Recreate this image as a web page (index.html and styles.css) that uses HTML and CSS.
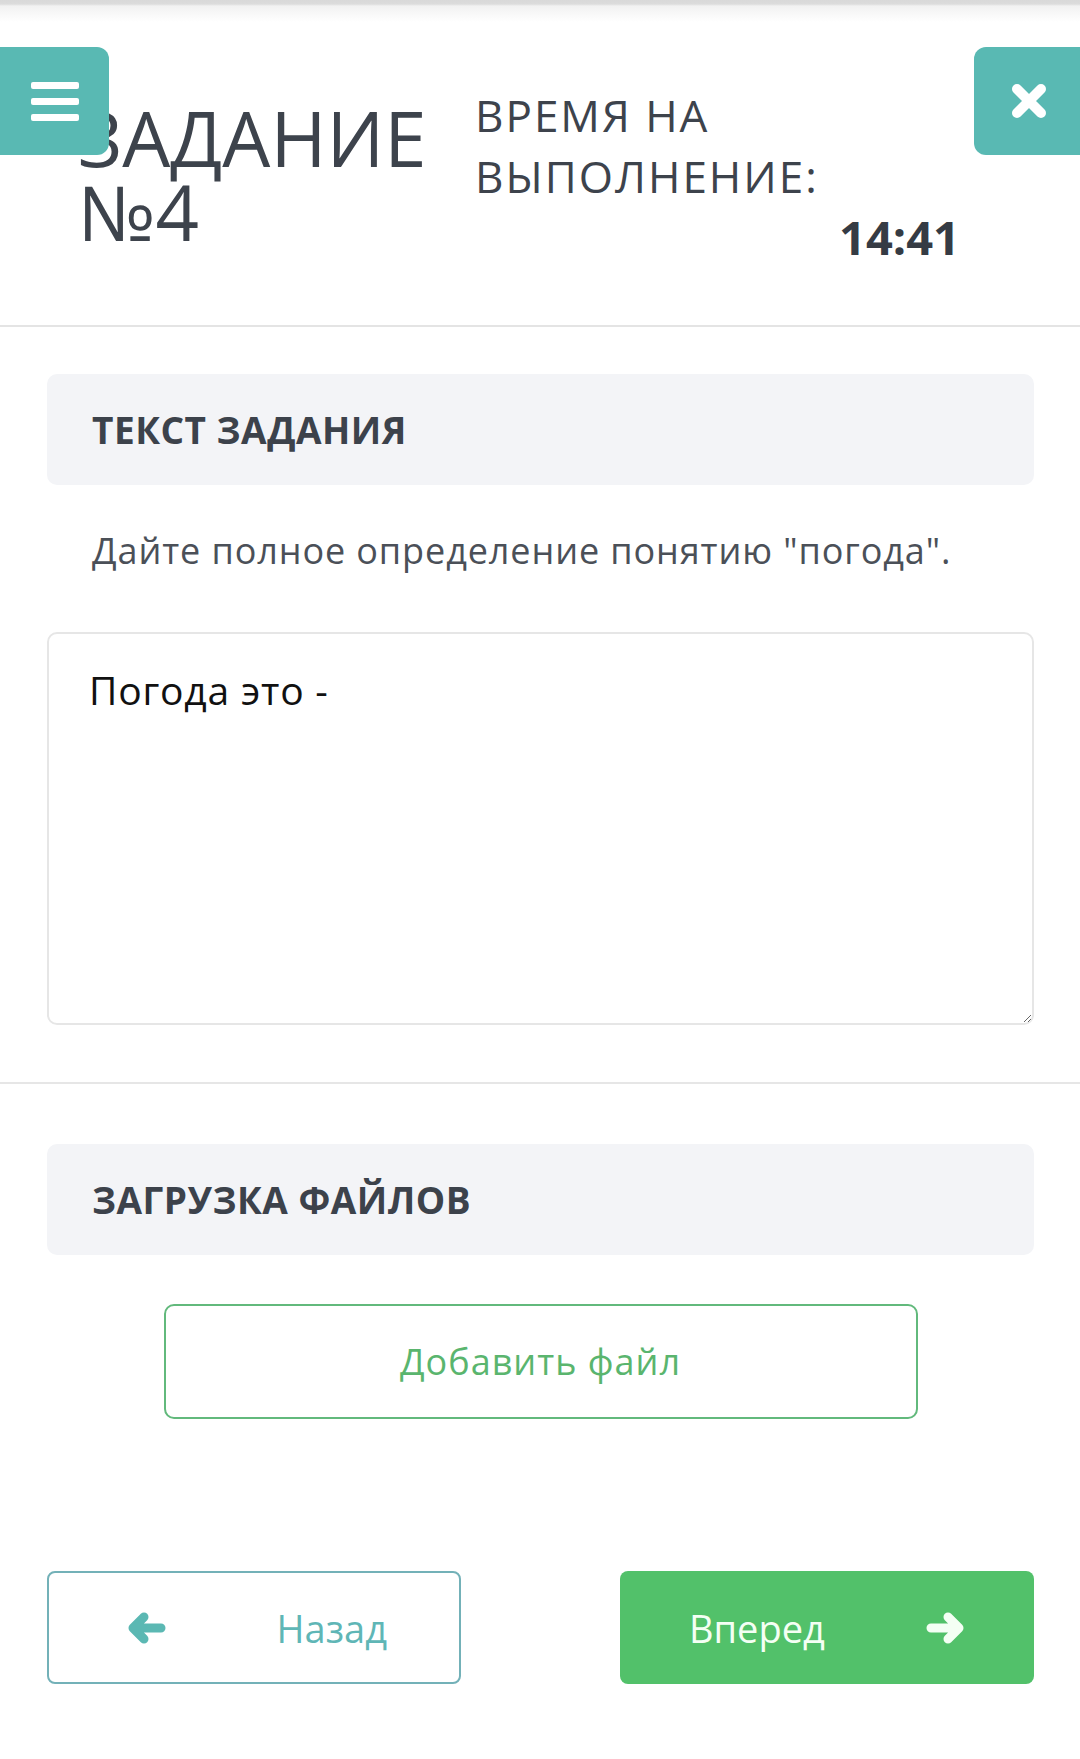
FILE: index.html
```html
<!DOCTYPE html>
<html lang="ru">
<head>
    <meta charset="UTF-8">
    <meta name="viewport" content="width=device-width, initial-scale=1.0">
    <title>Задание №4</title>
    <link rel="stylesheet" href="styles.css">
</head>
<body>

    <!-- Top bar: task number and timer -->
    <div class="header">
        <button class="menu-button" aria-label="Меню">
            <span></span><span></span><span></span>
        </button>

        <div class="task-title">ЗАДАНИЕ<br>№4</div>

        <div class="timer">
            <div class="timer-label">ВРЕМЯ НА<br>ВЫПОЛНЕНИЕ:</div>
            <div class="timer-value">14:41</div>
        </div>

        <button class="close-button" aria-label="Закрыть">
            <svg width="40" height="40" viewBox="0 0 40 40">
                <path d="M8 8 L32 32 M32 8 L8 32" stroke="#fff" stroke-width="10" stroke-linecap="round" fill="none"/>
            </svg>
        </button>
    </div>

    <!-- Task text and answer -->
    <div class="section">
        <div class="section-title">ТЕКСТ ЗАДАНИЯ</div>
        <p class="question">Дайте полное определение понятию "погода".</p>
        <textarea class="answer">Погода это -</textarea>
    </div>

    <hr class="divider">

    <!-- File upload -->
    <div class="section">
        <div class="section-title upload-title">ЗАГРУЗКА ФАЙЛОВ</div>
        <button class="add-file">Добавить файл</button>
    </div>

    <!-- Navigation -->
    <div class="nav">
        <button class="nav-button back">
            <svg width="40" height="34" viewBox="0 0 40 34">
                <path d="M35 17 H7 M18 6 L7 17 L18 28" stroke="#5bb8b3" stroke-width="9" stroke-linecap="round" stroke-linejoin="round" fill="none"/>
            </svg>
            <span>Назад</span>
        </button>
        <button class="nav-button next">
            <span>Вперед</span>
            <svg width="40" height="34" viewBox="0 0 40 34">
                <path d="M5 17 H33 M22 6 L33 17 L22 28" stroke="#f4fff4" stroke-width="9" stroke-linecap="round" stroke-linejoin="round" fill="none"/>
            </svg>
        </button>
    </div>

</body>
</html>
```

FILE: styles.css
```css
body {
    font-family: "Open Sans", Arial, sans-serif;
    margin: 0;
    padding: 0;
    color: #3d434c;
    background: #fff;
}
button {
    font-family: inherit;
    cursor: pointer;
}
.header {
    position: relative;
    display: flex;
    align-items: flex-start;
    height: 325px;
    padding-left: 78px;
    border-bottom: 2px solid #e4e4e4;
    background: linear-gradient(#d9d9d9 0, #dcdcdc 4px, #f2f2f2 6px, #fff 22px);
}
.task-title {
    width: 397px;
    flex-shrink: 0;
    margin-top: 101px;
    font-size: 76px;
    line-height: 74px;
    color: #3d434c;
}
.timer {
    width: 485px;
    margin-top: 85px;
    display: flex;
    flex-direction: column;
}
.timer-label {
    font-size: 44px;
    line-height: 61px;
    letter-spacing: 2px;
    color: #3d434c;
}
.timer-value {
    text-align: right;
    font-size: 47px;
    font-weight: bold;
    line-height: 60px;
    color: #353b44;
}
.menu-button, .close-button {
    position: absolute;
    top: 47px;
    height: 108px;
    border: none;
    background-color: #59b9b3;
    display: flex;
    justify-content: center;
    align-items: center;
    padding: 0;
}
.menu-button {
    left: 0;
    width: 109px;
    border-radius: 0 12px 12px 0;
    flex-direction: column;
    gap: 9px;
}
.menu-button span {
    display: block;
    width: 48px;
    height: 7px;
    border-radius: 2px;
    background: #fff;
}
.close-button {
    right: 0;
    width: 106px;
    border-radius: 12px 0 0 12px;
    padding-left: 4px;
}
.section {
    padding: 0 46px 0 47px;
    display: flex;
    flex-direction: column;
}
.section-title {
    margin-top: 47px;
    height: 111px;
    padding-left: 45px;
    display: flex;
    align-items: center;
    background: #f3f4f7;
    border-radius: 10px;
    font-size: 37px;
    font-weight: bold;
    letter-spacing: 0.5px;
    color: #3c424b;
}
.question {
    margin: 41px 0 0 0;
    padding-left: 45px;
    font-size: 36px;
    line-height: 50px;
    letter-spacing: 0.9px;
    color: #4b5058;
}
.answer {
    margin-top: 56px;
    height: 393px;
    box-sizing: border-box;
    padding: 30px 40px;
    border: 2px solid #e6e6e6;
    border-radius: 10px;
    font-family: "Open Sans", Arial, sans-serif;
    font-size: 39px;
    line-height: 52px;
    letter-spacing: 0.8px;
    color: #111;
    resize: vertical;
}
.divider {
    margin: 57px 0 0 0;
    border: none;
    border-top: 2px solid #e6e6e6;
}
.upload-title {
    margin-top: 60px;
}
.add-file {
    align-self: center;
    margin-top: 49px;
    width: 754px;
    height: 115px;
    border: 2px solid #62b97c;
    border-radius: 10px;
    background: #fff;
    font-size: 36px;
    letter-spacing: 1px;
    color: #5ab56e;
}
.nav {
    display: flex;
    justify-content: space-between;
    margin-top: 152px;
    padding: 0 46px 77px 47px;
}
.nav-button {
    width: 414px;
    height: 113px;
    display: flex;
    justify-content: space-between;
    align-items: center;
    border-radius: 8px;
    font-size: 38px;
}
.nav-button.back {
    padding: 0 72px 0 77px;
    border: 2px solid #73b1b8;
    background: #fff;
    color: #5fb6b6;
}
.nav-button.next {
    padding: 0 68px 0 69px;
    border: none;
    background: #52c16a;
    color: #f4fff4;
}
```
